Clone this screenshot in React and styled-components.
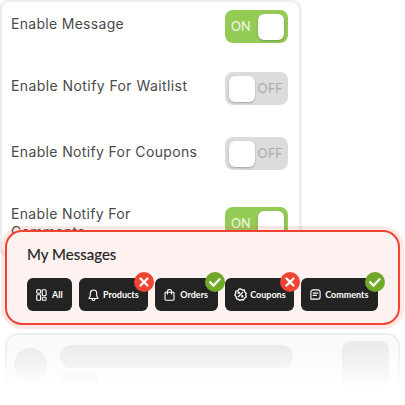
import React from "react";
import styled, { createGlobalStyle } from "styled-components";

const Global = createGlobalStyle`
  * { box-sizing: border-box; }
  body { margin: 0; background: #fff; overflow: hidden; }
`;

const Page = styled.main`
  width: 405px;
  height: 405px;
  overflow: hidden;
  display: flex;
  flex-direction: column;
  font-family: Lato, "Open Sans", sans-serif;
`;

const Settings = styled.section`
  flex: none;
  width: 303px;
  height: 257px;
  margin-left: -1px;
  border: 3px solid #eee;
  border-top-width: 2px;
  border-radius: 10px;
  padding: 8px 11px 0 9px;
  display: grid;
  grid-template-rows: 62px 65px 70px 50px;
`;

const Setting = styled.div`
  display: flex;
  justify-content: space-between;
  align-items: flex-start;
`;

const Label = styled.div`
  width: ${(p) => p.$width || 200}px;
  padding-top: ${(p) => p.$top}px;
  margin-top: ${(p) => p.$shift || 0}px;
  font: 400 14px/18px Inter, sans-serif;
  letter-spacing: ${(p) => p.$spacing}px;
  color: #4a4a4a;
`;

const Switch = styled.div`
  width: 63px;
  height: 33px;
  border-radius: 8px;
  padding: 0 ${(p) => (p.$on ? 4 : 3.5)}px 0 ${(p) => (p.$on ? 6 : 4)}px;
  display: flex;
  flex-direction: ${(p) => (p.$on ? "row" : "row-reverse")};
  align-items: center;
  justify-content: space-between;
  background: ${(p) => (p.$on ? "#93cb55" : "#dcdcdc")};
  color: ${(p) => (p.$on ? "#f3f9ec" : "#ababab")};
  font: 400 12.5px/16px Lato, sans-serif;
`;

const State = styled.span`
  width: ${(p) => (p.$on ? 20 : 27)}px;
  white-space: nowrap;
  letter-spacing: ${(p) => (p.$on ? 0 : 0.4)}px;
`;

const Knob = styled.span`
  width: 26px;
  height: 26px;
  border-radius: 6px;
  background: #fff;
  box-shadow: 0 1px 2px rgba(50, 50, 80, 0.35);
`;

const Messages = styled.section`
  flex: none;
  position: relative;
  z-index: 1;
  width: 395px;
  height: 95px;
  margin: -27px 0 0 5px;
  border: 2px solid #f04433;
  border-radius: 17px;
  padding: 12px 20px 0;
  background: #fef2f1;
  box-shadow: 0 0 0 4px rgba(240, 68, 51, 0.12);
`;

const Title = styled.h1`
  margin: 0 0 13px;
  font: 400 15px/21px Lato, sans-serif;
  letter-spacing: 0.02px;
  color: #252525;
  -webkit-text-stroke: 0.2px #252525;
`;

const Tabs = styled.nav`
  display: flex;
  gap: 7px;
`;

const Tab = styled.div`
  position: relative;
  width: ${(p) => p.$width}px;
  height: 33px;
  border-radius: 6px;
  padding-left: 9px;
  display: flex;
  align-items: center;
  gap: ${(p) => p.$gap}px;
  background: #232323;
  color: #fff;
  font: 700 9px/12px Lato, sans-serif;
  letter-spacing: 0;
  > svg { flex: none; }
`;

const Badge = styled.span`
  position: absolute;
  top: -6.5px;
  right: ${(p) => (p.$ok ? -6.5 : -6)}px;
  width: 20px;
  height: 20px;
  border-radius: 50%;
  display: grid;
  place-items: center;
  background: ${(p) => (p.$ok ? "#70a827" : "#f04433")};
`;

const Skeleton = styled.section`
  flex: none;
  width: 395px;
  height: 57px;
  margin: 8px 0 0 5px;
  border: 2px solid #eee;
  border-bottom: 0;
  border-radius: 13px 13px 0 0;
  background: #fafafa;
  padding: 6px 9px 0 7px;
  display: flex;
  justify-content: space-between;
  mask-image: linear-gradient(#000 25%, transparent 97%);
`;

const Avatar = styled.div`
  width: 33px;
  height: 33px;
  margin-top: 7px;
  border-radius: 50%;
  background: #ebebeb;
`;

const Lines = styled.div`
  width: 233px;
  margin: 4px 36px 0 0;
  display: flex;
  flex-direction: column;
  gap: 5px;
`;

const Line = styled.div`
  width: ${(p) => p.$width}px;
  height: ${(p) => p.$height}px;
  border-radius: 12px;
  background: #ebebeb;
`;

const Thumb = styled.div`
  width: 47px;
  height: 47px;
  border-radius: 9px;
  background: #ebebeb;
`;

const shapes = {
  all: <><rect x="1.5" y="1.5" width="8.5" height="7" rx="2"/><rect x="13.5" y="1.5" width="8.5" height="12" rx="2"/><rect x="1.5" y="11.5" width="8.5" height="11" rx="2"/><rect x="13.5" y="16.5" width="8.5" height="6" rx="2"/></>,
  bell: <><path d="M5 14V9a7 7 0 0 1 14 0v5l3 5H2z"/><path d="M9 20a3 3 0 0 0 6 0"/></>,
  bag: <><path d="M2.500 6.500h19l.5 13a3 3 0 0 1-3 3H5a3 3 0 0 1-3-3z"/><path d="M7.500 10V5a4.500 4 0 0 1 9 0v5"/></>,
  percent: <><path d="m12 1.500 3 2.200 3.800-.1 1 3.600 3 2.300L21.500 13l1 3.500-3.200 2-1.500 3.400-3.800-.4-3 1.700-2.800-2.400-3.600-.6-.4-3.700L1.500 13l1.700-3.400.1-3.700L7 5.200l2.200-3z"/><path d="m16 8-8 8"/><circle cx="8.8" cy="8.8" r="1"/><circle cx="15.2" cy="15.2" r="1"/></>,
  comment: <><path d="M2 22h15.500a4.500 4.500 0 0 0 4.500-4.500v-11A4.500 4.500 0 0 0 17.500 2h-11A4.500 4.500 0 0 0 2 6.500z"/><path d="M7 9h10M7 14h7"/></>,
};

const Icon = ({ name, width = 11, height = 12 }) => (
  <svg width={width} height={height} viewBox="0 0 24 24" preserveAspectRatio="none" fill="none" stroke="#fff" strokeWidth="2.4" strokeLinecap="round" strokeLinejoin="round">{shapes[name]}</svg>
);

const Mark = ({ ok }) => (
  <svg width="14" height="14" viewBox="0 0 14 14" fill="none" stroke="#fff" strokeWidth="2.3" strokeLinecap="round">
    <path d={ok ? "m2.200 7.200 3.200 3.300 6.200-6.300" : "m3.500 3.500 7 7m0-7-7 7"} />
  </svg>
);

const settings = [
  { label: "Enable Message", on: true, top: 5, spacing: 0.3 },
  { label: "Enable Notify For Waitlist", top: 5, spacing: 0.42 },
  { label: "Enable Notify For Coupons", top: 6, spacing: 0.36 },
  { label: "Enable Notify For Comments", on: true, top: 0, shift: -2, spacing: 0.34, width: 140 },
];

const tabs = [
  { label: "All", icon: "all", width: 45, gap: 5 },
  { label: "Products", icon: "bell", width: 69.5, gap: 4 },
  { label: "Orders", icon: "bag", width: 63, gap: 5, ok: true },
  { label: "Coupons", icon: "percent", iconWidth: 13, iconHeight: 13, width: 69, gap: 3 },
  { label: "Comments", icon: "comment", iconHeight: 11, width: 77, gap: 4, ok: true },
];

export default function App() {
  return (
    <>
      <Global />
      <Page>
        <Settings>
          {settings.map((s) => (
            <Setting key={s.label}>
              <Label $top={s.top} $shift={s.shift} $spacing={s.spacing} $width={s.width}>{s.label}</Label>
              <Switch $on={s.on}><State $on={s.on}>{s.on ? "ON" : "OFF"}</State><Knob /></Switch>
            </Setting>
          ))}
        </Settings>
        <Messages>
          <Title>My Messages</Title>
          <Tabs>
            {tabs.map((t, i) => (
              <Tab key={t.label} $width={t.width} $gap={t.gap}>
                <Icon name={t.icon} width={t.iconWidth} height={t.iconHeight} />{t.label}
                {i > 0 && <Badge $ok={t.ok}><Mark ok={t.ok} /></Badge>}
              </Tab>
            ))}
          </Tabs>
        </Messages>
        <Skeleton>
          <Avatar />
          <Lines><Line $width={233} $height={23} /><Line $width={38} $height={11} /></Lines>
          <Thumb />
        </Skeleton>
      </Page>
    </>
  );
}
